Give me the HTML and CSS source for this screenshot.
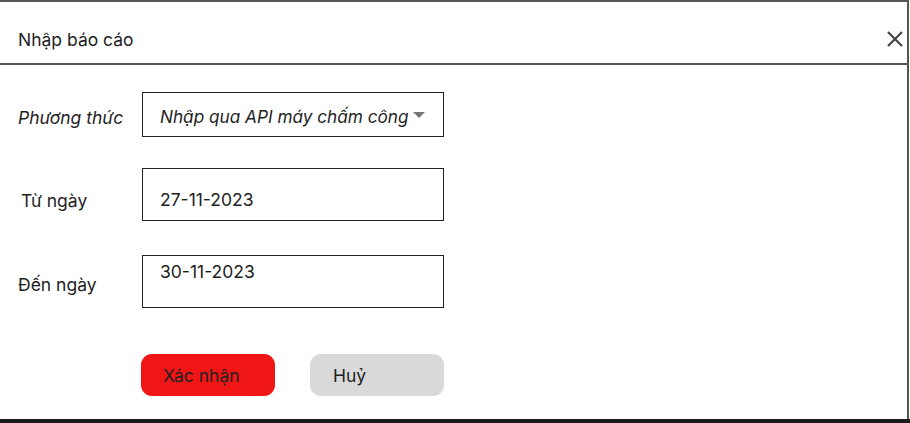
FILE: index.html
```html
<!DOCTYPE html>
<html lang="vi">
<head>
<meta charset="utf-8">
<link rel="stylesheet" href="styles.css">
</head>
<body>
<div class="dialog">
  <div class="header">
    <span class="title">Nhập báo cáo</span>
    <svg class="close" width="18" height="18" viewBox="0 0 18 18"><path d="M2 2 L16 16 M16 2 L2 16" stroke="#444" stroke-width="2.2" fill="none"/></svg>
  </div>
  <div class="body">
    <div class="row row-method">
      <span class="label">Phương thức</span>
      <div class="box select">
        <span class="value italic">Nhập qua API máy chấm công</span>
        <span class="arrow"></span>
      </div>
    </div>
    <div class="row row-from">
      <span class="label label-from">Từ ngày</span>
      <div class="box date"><span class="value">27-11-2023</span></div>
    </div>
    <div class="row row-to">
      <span class="label">Đến ngày</span>
      <div class="box date date-top"><span class="value">30-11-2023</span></div>
    </div>
    <div class="actions">
      <button class="btn btn-ok">Xác nhận</button>
      <button class="btn btn-cancel">Huỷ</button>
    </div>
  </div>
</div>
<div class="band"></div>
</body>
</html>
```
FILE: styles.css
```css
* { box-sizing: border-box; }
html, body { margin: 0; padding: 0; background: #fff; }
body {
  font-family: Inter, "Noto Sans", sans-serif;
  color: #1e1e1e;
  font-size: 17.5px;
  width: 910px;
  height: 423px;
  overflow: hidden;
}
.dialog {
  width: 909px;
  height: 419px;
  border-top: 2px solid #555;
  border-right: 2px solid #555;
  display: flex;
  flex-direction: column;
}
.header {
  height: 63px;
  border-bottom: 2px solid #555;
  display: flex;
  align-items: center;
  justify-content: space-between;
  padding: 14px 5px 0 18px;
  margin-right: -2px;
}
.title { font-size: 17.5px; line-height: 20px; margin-top: 0; }
.close { display: block; margin-top: -1px; }
.body {
  padding-top: 27px;
  display: flex;
  flex-direction: column;
}
.row {
  display: flex;
  align-items: center;
}
.label {
  width: 142px;
  padding-left: 18px;
  font-size: 17.5px;
  line-height: 20px;
}
.row-method .label { font-style: italic; padding-top: 7px; }
.label-from { padding-left: 21px; padding-top: 12px; }
.row-to .label { padding-top: 6px; }
.box {
  width: 302px;
  border: 1.5px solid #222;
  display: flex;
  align-items: center;
  padding-left: 17px;
}
.select { height: 45px; justify-content: space-between; padding-right: 18px; padding-top: 5px; }
.italic { font-style: italic; }
.value { font-size: 17.5px; line-height: 20px; }
.select .value { font-size: 17.2px; }
.arrow {
  width: 0; height: 0;
  border-left: 6px solid transparent;
  border-right: 6px solid transparent;
  border-top: 6px solid #777;
  margin-top: -5px;
}
.row-from { margin-top: 31px; }
.date { height: 53px; padding-top: 10px; }
.row-to { margin-top: 34px; }
.date-top { align-items: flex-start; padding-top: 6px; }
.actions {
  display: flex;
  gap: 35px;
  margin-top: 46px;
  padding-left: 141px;
}
.btn {
  width: 134px;
  height: 42px;
  border: none;
  border-radius: 11px;
  font-family: inherit;
  font-size: 17.5px;
  color: #222;
  text-align: left;
  padding: 0 0 0 22px;
}
.btn-ok { background: #f01616; }
.btn-cancel { background: #d9d9d9; padding-left: 23px; }
.band { height: 4px; background: #1b1b1b; }
```
